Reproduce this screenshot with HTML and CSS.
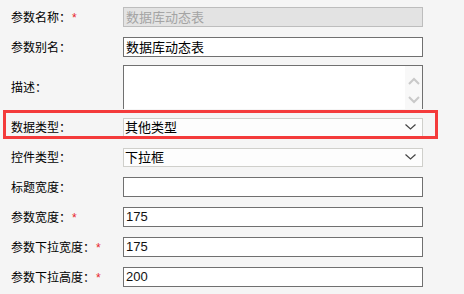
FILE: index.html
```html
<!DOCTYPE html>
<html lang="zh-CN">
  <head>
    <meta charset="UTF-8" />
    <title>参数设置</title>
    <link rel="stylesheet" href="styles.css">
  </head>
  <body>
    <div class="form">
      <div class="row">
        <label class="label">参数名称：<span class="req">*</span></label>
        <div class="field input disabled">数据库动态表</div>
      </div>
      <div class="row row-short">
        <label class="label">参数别名：</label>
        <div class="field input">数据库动态表</div>
      </div>
      <div class="row row-area">
        <label class="label">描述：</label>
        <div class="field area">
          <div class="scroll">
            <svg width="12" height="8" viewBox="0 0 12 8"><path d="M1 7 L6 2 L11 7" fill="none" stroke="#c9c9c9" stroke-width="2"/></svg>
            <svg width="12" height="8" viewBox="0 0 12 8"><path d="M1 1 L6 6 L11 1" fill="none" stroke="#c9c9c9" stroke-width="2"/></svg>
          </div>
        </div>
      </div>
      <div class="row highlight">
        <label class="label">数据类型：</label>
        <div class="field select">其他类型
          <svg class="caret" width="11" height="6" viewBox="0 0 11 6"><path d="M0.5 0.5 L5.5 5 L10.5 0.5" fill="none" stroke="#444" stroke-width="1.2"/></svg>
        </div>
      </div>
      <div class="row">
        <label class="label">控件类型：</label>
        <div class="field select">下拉框
          <svg class="caret" width="11" height="6" viewBox="0 0 11 6"><path d="M0.5 0.5 L5.5 5 L10.5 0.5" fill="none" stroke="#444" stroke-width="1.2"/></svg>
        </div>
      </div>
      <div class="row">
        <label class="label">标题宽度：</label>
        <div class="field input"></div>
      </div>
      <div class="row">
        <label class="label">参数宽度：<span class="req">*</span></label>
        <div class="field input num">175</div>
      </div>
      <div class="row">
        <label class="label">参数下拉宽度：<span class="req">*</span></label>
        <div class="field input num">175</div>
      </div>
      <div class="row">
        <label class="label">参数下拉高度：<span class="req">*</span></label>
        <div class="field input num">200</div>
      </div>
    </div>
  </body>
</html>
```

FILE: styles.css
```css
body {
  margin: 0;
  background: #f5f5f5;
  font-family: "Noto Sans CJK SC", "Microsoft YaHei", sans-serif;
  color: #000;
}

.form {
  padding: 7px 0 0 11px;
  display: flex;
  flex-direction: column;
}

.row {
  display: flex;
  align-items: center;
  height: 20px;
  margin-bottom: 10px;
  position: relative;
}

.row-short {
  margin-bottom: 8px;
}

.row-area {
  height: 44px;
  margin-bottom: 8px;
}

.label {
  width: 112px;
  font-size: 12px;
  line-height: 20px;
  white-space: nowrap;
}

.req {
  color: #e8232a;
  font-family: "Liberation Sans", sans-serif;
  font-size: 12px;
  margin-left: 1px;
}

.field {
  box-sizing: border-box;
  width: 300px;
  height: 20px;
  font-size: 13px;
  line-height: 18px;
  background: #fff;
  border: 1px solid #707070;
  padding-left: 2px;
  white-space: nowrap;
}

.disabled {
  background: #e3e3e3;
  border-color: #bdbdbd;
  color: #a4a4a4;
}

.num {
  font-family: "Liberation Sans", sans-serif;
  color: #111;
}

.area {
  height: 44px;
  border-bottom: none;
  display: flex;
  justify-content: flex-end;
  padding: 0;
}

.scroll {
  width: 17px;
  background: #f8f8f8;
  display: flex;
  flex-direction: column;
  align-items: center;
  justify-content: space-between;
  padding: 11px 0 5px;
}

.select {
  display: flex;
  align-items: center;
  justify-content: space-between;
  border-color: #cfcfcb;
  background: #fdfdfd;
  padding: 0 6px 0 1px;
  height: 19px;
}

.highlight::after {
  content: "";
  position: absolute;
  left: -8px;
  top: -7px;
  width: 429px;
  height: 23px;
  border: 3px solid #f43b3b;
}
```
